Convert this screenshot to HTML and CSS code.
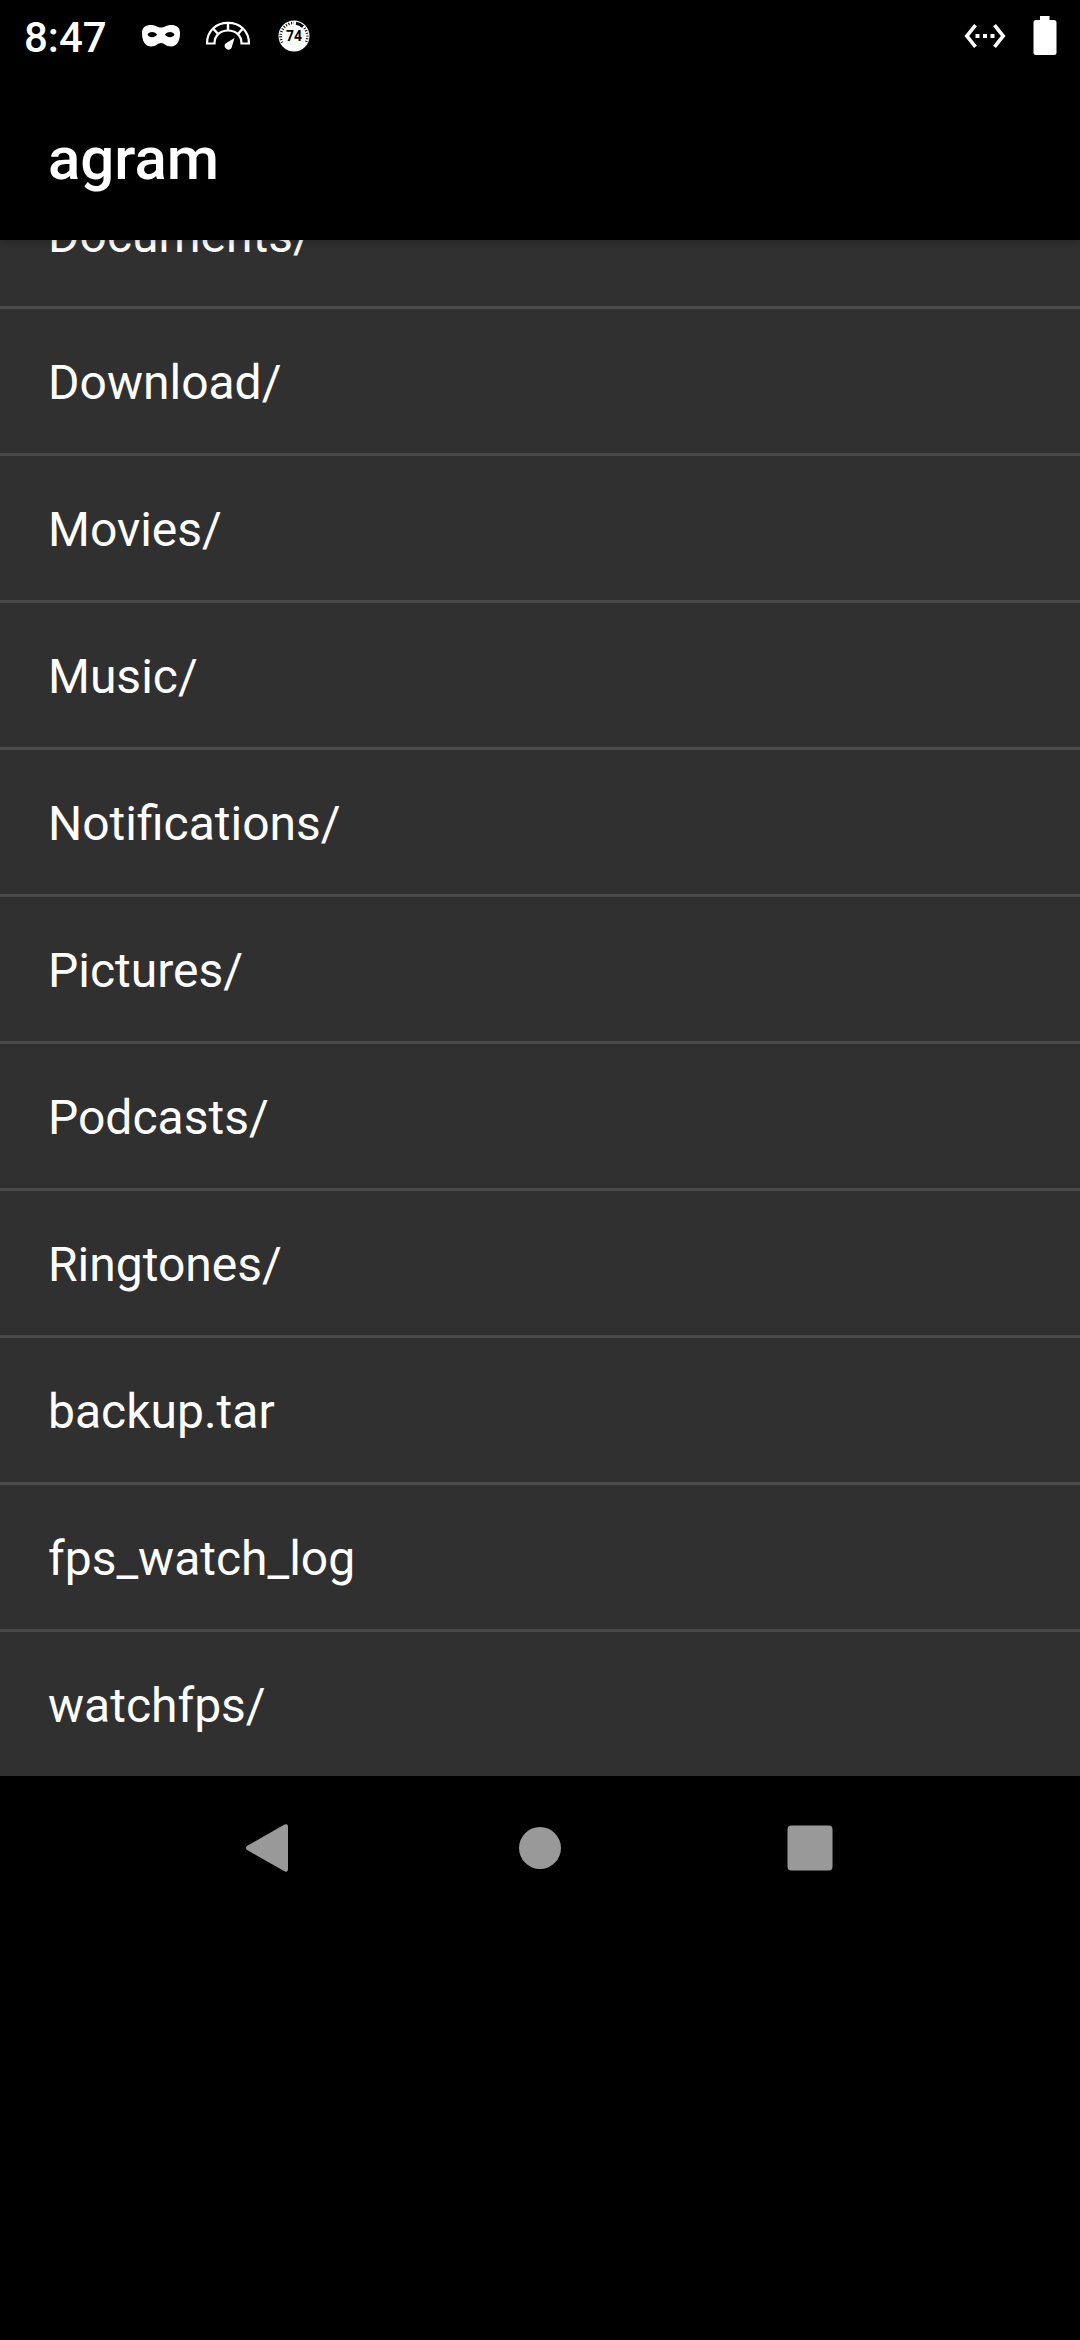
FILE: index.html
```html
<!DOCTYPE html>
<html lang="en">
<head>
<meta charset="utf-8">
<meta name="viewport" content="width=device-width, initial-scale=1">
<title>agram</title>
<link rel="stylesheet" href="styles.css">
</head>
<body>
<div class="top">
  <div class="status">
    <time class="clock">8:47</time>
    <div class="notices">
      <svg width="40" height="24" viewBox="0 0 40 24" aria-hidden="true">
        <path fill="#fff" fill-rule="evenodd" d="M1 9C1 3 5 1 10 1C15 1 16 3.500 20 3.500C24 3.500 25 1 30 1C35 1 39 3 39 9C39 17 36 22.500 30 22.500C25 22.500 23 19 20 19C17 19 15 22.500 10 22.500C4 22.500 1 17 1 9ZM6.500 10.500C8 14 14 14 16 10.500C13 7.300 9 7.300 6.500 10.500ZM24 10.500C26 14 32 14 33.500 10.500C31 7.300 27 7.300 24 10.500Z"/>
      </svg>
      <svg width="46" height="30" viewBox="0 0 46 30" aria-hidden="true">
        <path fill="none" stroke="#fff" stroke-width="2.200" d="M2 22.500C2 10 11 1.800 23 1.800S44 10 44 22.500H36.500C36.500 14 30.500 9.500 23 9.500S9.500 14 9.500 22.500Z"/>
        <path stroke="#fff" stroke-width="2.400" d="M23 2V10M8.500 8L13.500 13.500M37.500 8L32.500 13.500"/>
        <path fill="#fff" d="M29.500 17L26.500 27A3.600 3.600 0 1 1 20.500 22.500Z"/>
      </svg>
      <svg width="32" height="32" viewBox="0 0 32 32" aria-hidden="true">
        <circle cx="16" cy="16" r="15.500" fill="#fff"/>
        <path fill="none" stroke="#000" stroke-width="2.600" stroke-dasharray="1 1.700" d="M4.200 22.500A13.300 13.300 0 0 1 16 2.900"/>
        <path fill="none" stroke="#000" stroke-width="3" d="M18 3.300A13 13 0 0 1 25 6.700"/>
        <path fill="none" stroke="#000" stroke-width="2.600" stroke-dasharray="1 1.700" d="M26.500 8A13.300 13.300 0 0 1 27.800 22.500"/>
        <text class="badge" x="16" y="21" text-anchor="middle">74</text>
      </svg>
    </div>
    <div class="system">
      <svg width="42" height="24" viewBox="0 0 42 24" aria-hidden="true">
        <path fill="none" stroke="#fff" stroke-width="3.600" d="M11.500 1.200L2.800 12L11.500 22.800M30.500 1.200L39.200 12L30.500 22.800"/>
        <path fill="#fff" d="M11.500 10h4v4h-4zM19 10h4v4h-4zM26.500 10h4v4h-4z"/>
      </svg>
      <svg width="24" height="40" viewBox="0 0 24 40" aria-hidden="true">
        <path fill="#fff" d="M7 0H16.500V4H21Q23.500 4 23.500 6.500V36.500Q23.500 39 21 39H3Q.500 39 .500 36.500V6.500Q.500 4 3 4H7Z"/>
      </svg>
    </div>
  </div>
  <header class="bar"><h1 class="title">agram</h1></header>
</div>
<main>
  <ul class="files">
    <li><button class="file" type="button">Documents/</button></li>
    <li><button class="file" type="button">Download/</button></li>
    <li><button class="file" type="button">Movies/</button></li>
    <li><button class="file" type="button">Music/</button></li>
    <li><button class="file" type="button">Notifications/</button></li>
    <li><button class="file" type="button">Pictures/</button></li>
    <li><button class="file" type="button">Podcasts/</button></li>
    <li><button class="file" type="button">Ringtones/</button></li>
    <li><button class="file" type="button">backup.tar</button></li>
    <li><button class="file" type="button">fps_watch_log</button></li>
    <li><button class="file" type="button">watchfps/</button></li>
  </ul>
</main>
<nav class="nav">
  <button class="key" type="button" aria-label="Back">
    <svg width="48" height="48" viewBox="0 0 48 48"><path fill="#999" d="M38.500 .600Q42 -1 42 3V45Q42 49 38.500 47.200L1 26Q-1 24 1 22Z"/></svg>
  </button>
  <button class="key" type="button" aria-label="Home">
    <svg width="48" height="48" viewBox="0 0 48 48"><circle cx="24" cy="24" r="21" fill="#999"/></svg>
  </button>
  <button class="key" type="button" aria-label="Overview">
    <svg width="48" height="48" viewBox="0 0 48 48"><rect x="1.500" y="1.500" width="45" height="45" rx="4" fill="#999"/></svg>
  </button>
</nav>
</body>
</html>
```
FILE: styles.css
```css
* {
  box-sizing: border-box;
}

body {
  margin: 0;
  background: #000;
  color: #fff;
  font-family: Roboto, "Noto Sans", sans-serif;
}

svg {
  display: block;
}

/* Stays above the list, which scrolls beneath it */
.top {
  position: sticky;
  top: 0;
  z-index: 1;
  background: #000;
  box-shadow: 0 2px 8px rgba(0, 0, 0, 0.2);
}

.status {
  display: flex;
  align-items: center;
  height: 72px;
  padding: 0 23px 0 24px;
}

.clock {
  padding-top: 4px;
  font-size: 42px;
  font-weight: 500;
  line-height: 48px;
}

.notices {
  display: flex;
  align-items: center;
  gap: 24px;
  margin-left: 34px;
}

.notices svg:last-child {
  margin-left: 3px;
}

.badge {
  font-size: 14px;
  font-weight: 700;
}

.system {
  display: flex;
  align-items: center;
  gap: 27px;
  margin-left: auto;
}

.bar {
  display: flex;
  align-items: center;
  height: 168px;
  padding: 6px 48px 0;
}

.title {
  margin: 0;
  font-size: 60px;
  font-weight: 500;
  line-height: 72px;
}

.files {
  margin: -78px 0 0;
  padding: 0;
  list-style: none;
  background: #303030;
}

.files li + li {
  border-top: 3px solid #4a4a4a;
}

.file {
  display: block;
  width: 100%;
  padding: 42px 48px 38px;
  border: 0;
  background: none;
  color: inherit;
  font: inherit;
  font-size: 48px;
  line-height: 64px;
  text-align: left;
}

.nav {
  display: flex;
  justify-content: center;
  height: 144px;
}

.key {
  display: grid;
  place-items: center;
  width: 25%;
  padding: 0;
  border: 0;
  background: none;
}
```
